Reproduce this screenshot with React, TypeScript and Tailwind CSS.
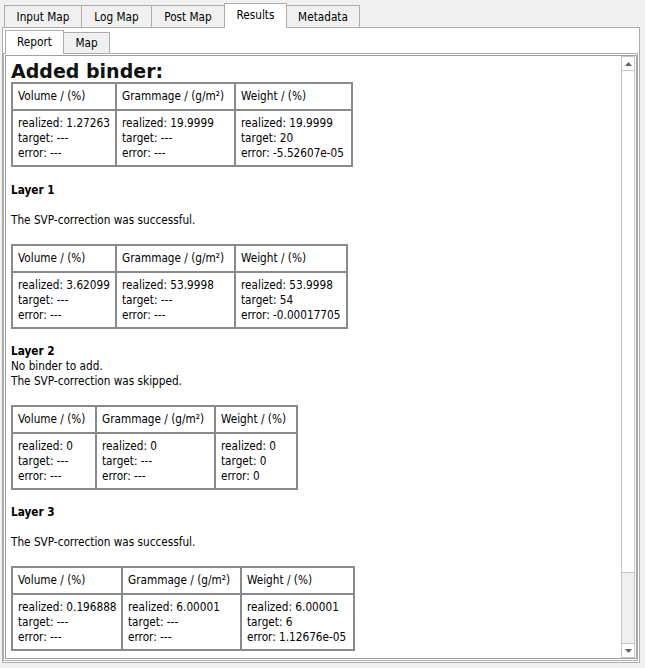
import React from "react";

type TabProps = { label: string; selected?: boolean; w: string; first?: boolean; inner?: boolean };

function Tab({ label, selected, w, first, inner }: TabProps) {
  const h = inner
    ? selected
      ? "h-[24px] -mb-px pt-[1px]"
      : "h-[21px] pt-[2px]"
    : selected
    ? "h-[25px] -mb-px"
    : "h-[22px] pt-[2px]";
  return (
    <div
      className={`${w} ${h} ${first ? "" : "-ml-px"} ${
        selected ? "bg-white z-10" : "bg-[#f0f0f0]"
      } relative shrink-0 flex items-center justify-center border-t border-l border-r border-[#acacac] text-black whitespace-nowrap`}
    >
      {label}
    </div>
  );
}

type TableData = {
  ws: [string, string, string];
  rows: [string[], string[], string[]];
};

const heads = ["Volume / (%)", "Grammage / (g/m²)", "Weight / (%)"];

function DataTable({ ws, rows }: TableData) {
  return (
    <div className="w-fit flex flex-col border border-[#8a8a8a]">
      <div className="flex">
        {heads.map((h, i) => (
          <div
            key={i}
            className={`${ws[i]} shrink-0 border border-[#8a8a8a] pl-[5px] pt-[5px] pb-[5px] leading-[15px] whitespace-nowrap overflow-hidden`}
          >
            {h}
          </div>
        ))}
      </div>
      <div className="flex">
        {rows.map((c, i) => (
          <div
            key={i}
            className={`${ws[i]} shrink-0 border border-[#8a8a8a] pl-[5px] pt-[5px] pb-[4px] leading-[15px] whitespace-nowrap overflow-hidden`}
          >
            {c.map((l, j) => (
              <div key={j}>{l}</div>
            ))}
          </div>
        ))}
      </div>
    </div>
  );
}

const dash = ["target: ---", "error: ---"];

export default function App() {
  return (
    <div className="w-[645px] h-[668px] bg-[#f0f0f0] overflow-hidden font-['DejaVu_Sans_Condensed','DejaVu_Sans',sans-serif] text-[11.7px] text-black">
      {/* outer tab bar */}
      <div className="h-[27px] pl-[4px] flex items-end">
        <Tab label="Input Map" w="w-[78px]" first />
        <Tab label="Log Map" w="w-[71px]" />
        <Tab label="Post Map" w="w-[74px]" />
        <Tab label="Results" w="w-[63px]" selected />
        <Tab label="Metadata" w="w-[74px]" />
      </div>
      {/* outer pane */}
      <div className="ml-[2px] w-[638px] h-[636px] border border-[#acacac] bg-white flex flex-col">
        {/* inner tab bar */}
        <div className="h-[25px] pl-[2px] flex items-end shrink-0">
          <Tab label="Report" w="w-[59px]" selected first inner />
          <Tab label="Map" w="w-[47px]" inner />
        </div>
        {/* inner pane */}
        <div className="w-[635px] h-[608px] border border-[#acacac] bg-white pl-[1px] pt-[1px]">
          {/* text frame */}
          <div className="w-[632px] h-[604px] border border-[#a0a0a0] bg-white flex">
            <div className="flex-1 overflow-hidden pl-[5px] pt-[5px]">
              <div className="font-['DejaVu_Sans',sans-serif] font-bold text-[19px] leading-[21px] text-[#111]">
                Added binder:
              </div>
              <DataTable
                ws={["w-[104px]", "w-[119px]", "w-[117px]"]}
                rows={[
                  ["realized: 1.27263", ...dash],
                  ["realized: 19.9999", ...dash],
                  ["realized: 19.9999", "target: 20", "error: -5.52607e-05"],
                ]}
              />
              <div className="mt-[16px] leading-[15px] font-bold">Layer 1</div>
              <div className="mt-[15px] leading-[15px]">The SVP-correction was successful.</div>
              <div className="mt-[16px]">
                <DataTable
                  ws={["w-[104px]", "w-[119px]", "w-[112px]"]}
                  rows={[
                    ["realized: 3.62099", ...dash],
                    ["realized: 53.9998", ...dash],
                    ["realized: 53.9998", "target: 54", "error: -0.00017705"],
                  ]}
                />
              </div>
              <div className="mt-[15px] leading-[15px] font-bold">Layer 2</div>
              <div className="leading-[15px]">No binder to add.</div>
              <div className="leading-[15px]">The SVP-correction was skipped.</div>
              <div className="mt-[16px]">
                <DataTable
                  ws={["w-[84px]", "w-[119px]", "w-[82px]"]}
                  rows={[
                    ["realized: 0", ...dash],
                    ["realized: 0", ...dash],
                    ["realized: 0", "target: 0", "error: 0"],
                  ]}
                />
              </div>
              <div className="mt-[15px] leading-[15px] font-bold">Layer 3</div>
              <div className="mt-[15px] leading-[15px]">The SVP-correction was successful.</div>
              <div className="mt-[16px]">
                <DataTable
                  ws={["w-[110px]", "w-[119px]", "w-[113px]"]}
                  rows={[
                    ["realized: 0.196888", ...dash],
                    ["realized: 6.00001", ...dash],
                    ["realized: 6.00001", "target: 6", "error: 1.12676e-05"],
                  ]}
                />
              </div>
            </div>
            {/* scrollbar */}
            <div className="w-[14px] mr-[1px] flex flex-col shrink-0">
              <div className="h-[15px] border border-[#c4c4c4] bg-white flex items-center justify-center shrink-0">
                <svg width="7" height="4" viewBox="0 0 7 4">
                  <polygon points="3.5,0 7,4 0,4" fill="#606060" />
                </svg>
              </div>
              <div className="h-[502px] border-x border-b border-[#c4c4c4] bg-white shrink-0" />
              <div className="flex-1 border-x border-[#c4c4c4] bg-[#f0f0f0]" />
              <div className="h-[15px] border border-[#c4c4c4] bg-white flex items-center justify-center shrink-0">
                <svg width="7" height="4" viewBox="0 0 7 4">
                  <polygon points="0,0 7,0 3.5,4" fill="#606060" />
                </svg>
              </div>
            </div>
          </div>
        </div>
      </div>
    </div>
  );
}
